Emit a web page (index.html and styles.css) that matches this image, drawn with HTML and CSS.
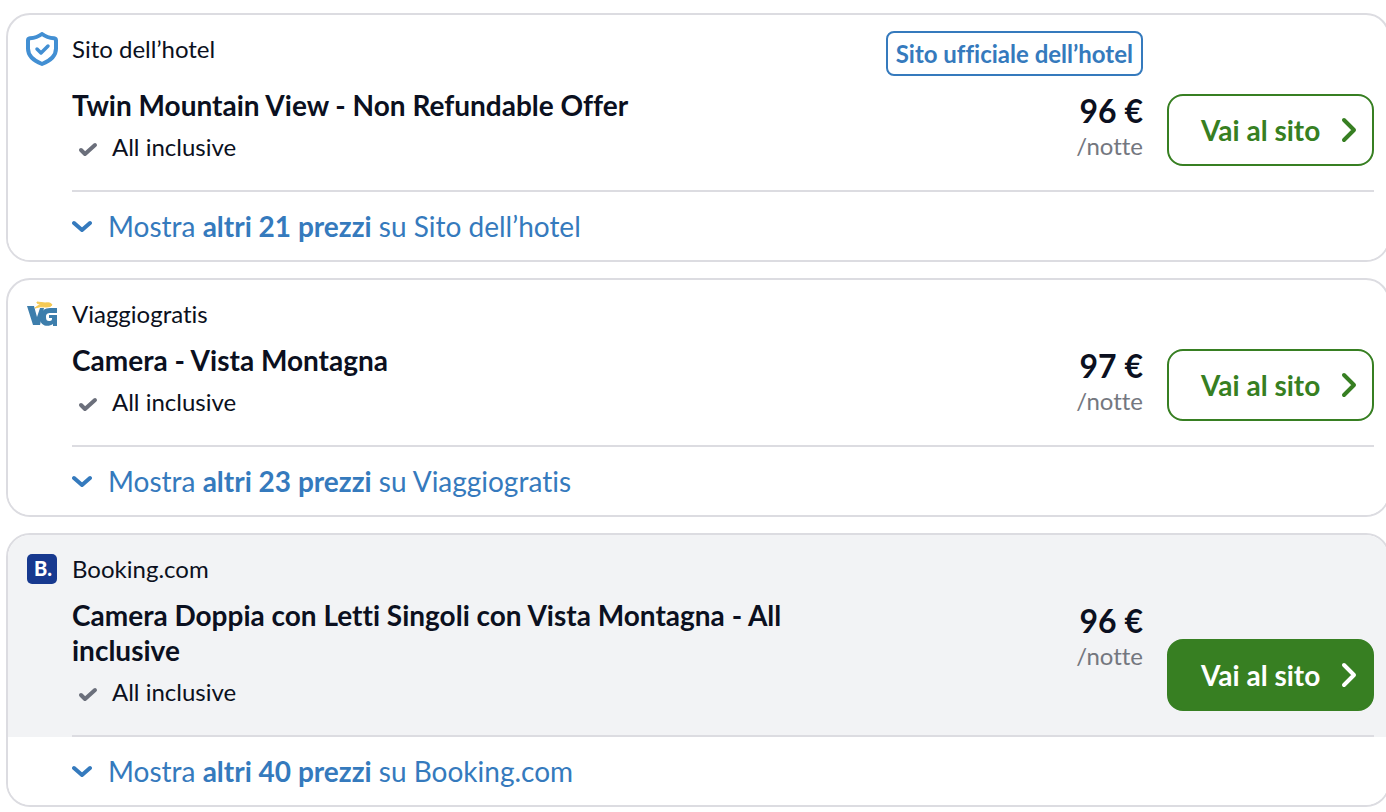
FILE: index.html
```html
<!DOCTYPE html>
<html lang="it">

<head>
    <meta charset="UTF-8">
    <meta name="viewport" content="width=device-width, initial-scale=1.0">
    <title>Offerte</title>
    <link rel="stylesheet" href="styles.css">
</head>

<body>
    <!-- shared icons -->
    <svg class="sprite" aria-hidden="true">
        <symbol id="check" viewBox="0 0 20 16">
            <path d="M3 9l4 4 10-9" fill="none" stroke="currentColor" stroke-width="4" stroke-linecap="round" stroke-linejoin="round" />
        </symbol>
        <symbol id="down" viewBox="0 0 20 14">
            <path d="M2 4l8 7 8-7" fill="none" stroke="currentColor" stroke-width="4" stroke-linecap="round" stroke-linejoin="round" />
        </symbol>
        <symbol id="right" viewBox="0 0 16 26">
            <path d="M3 3l10 10L3 23" fill="none" stroke="currentColor" stroke-width="4" stroke-linecap="round" stroke-linejoin="round" />
        </symbol>
    </svg>

    <main class="deals">
        <article class="deal">
            <div class="deal-main">
                <svg class="logo" viewBox="0 0 32 34" aria-hidden="true">
                    <path d="M16 2c4 3 8 4 12 4.200q2 .2 2 2.300v8c0 7-5 12-14 15.500C7 28.500 2 23.500 2 16.500v-8Q2 6.400 4 6.200C8 6 12 5 16 2z" fill="none" stroke="#428fd3" stroke-width="4" stroke-linejoin="round" />
                    <path d="M11 17l4 4 7-7" fill="none" stroke="#428fd3" stroke-width="3.500" stroke-linecap="round" stroke-linejoin="round" />
                </svg>
                <div class="content">
                    <div class="top">
                        <span class="site">Sito dell’hotel</span>
                        <span class="badge">Sito ufficiale dell’hotel</span>
                    </div>
                    <div class="row">
                        <div class="info">
                            <h2 class="title">Twin Mountain View - Non Refundable Offer</h2>
                            <p class="perk"><svg class="check"><use href="#check" /></svg>All inclusive</p>
                        </div>
                        <div class="price"><strong>96 €</strong><span>/notte</span></div>
                        <button class="btn">Vai al sito<svg class="arrow"><use href="#right" /></svg></button>
                    </div>
                </div>
            </div>
            <button class="more"><svg class="down"><use href="#down" /></svg><span>Mostra <b>altri 21 prezzi</b> su Sito dell’hotel</span></button>
        </article>

        <article class="deal">
            <div class="deal-main">
                <svg class="logo" viewBox="0 0 32 34" aria-hidden="true">
                    <path d="M1 9h7l3 11 3-9h4l-4 17H7z" fill="#3d7eac" />
                    <path d="M31 11v5h-6c-4 0-5 1-5 4s1 4 3 4c3 0 3-1 3-3h-3v-3h8v11h-4v-2c-4 3-13 3-13-6 0-7 5-10 10-10z" fill="#3d7eac" />
                    <path d="M9 11q3-3 6-3l-4-2V5l8 1q6-1 7 2-1 2-6 2-6-1-11 1z" fill="#f6ca55" stroke="#f6ca55" />
                </svg>
                <div class="content">
                    <div class="top">
                        <span class="site">Viaggiogratis</span>
                    </div>
                    <div class="row">
                        <div class="info">
                            <h2 class="title">Camera - Vista Montagna</h2>
                            <p class="perk"><svg class="check"><use href="#check" /></svg>All inclusive</p>
                        </div>
                        <div class="price"><strong>97 €</strong><span>/notte</span></div>
                        <button class="btn">Vai al sito<svg class="arrow"><use href="#right" /></svg></button>
                    </div>
                </div>
            </div>
            <button class="more"><svg class="down"><use href="#down" /></svg><span>Mostra <b>altri 23 prezzi</b> su Viaggiogratis</span></button>
        </article>

        <article class="deal">
            <div class="deal-main highlight">
                <svg class="logo" viewBox="0 0 32 34" aria-hidden="true">
                    <rect x="1" y="2" width="30" height="30" rx="5" fill="#17398f" />
                    <text x="8" y="24" class="logo-text">B.</text>
                </svg>
                <div class="content">
                    <div class="top">
                        <span class="site">Booking.com</span>
                    </div>
                    <div class="row">
                        <div class="info">
                            <h2 class="title">Camera Doppia con Letti Singoli con Vista Montagna - All inclusive</h2>
                            <p class="perk"><svg class="check"><use href="#check" /></svg>All inclusive</p>
                        </div>
                        <div class="price"><strong>96 €</strong><span>/notte</span></div>
                        <button class="btn btn-full">Vai al sito<svg class="arrow"><use href="#right" /></svg></button>
                    </div>
                </div>
            </div>
            <button class="more"><svg class="down"><use href="#down" /></svg><span>Mostra <b>altri 40 prezzi</b> su Booking.com</span></button>
        </article>
    </main>
</body>

</html>
```
FILE: styles.css
```css
* {
    box-sizing: border-box;
}

body {
    margin: 0;
    background-color: white;
    color: #0b1020;
    font-family: Lato, "Open Sans", sans-serif;
    font-size: 24px;
    line-height: 35px;
    font-variant-ligatures: none;
    overflow-x: hidden;
}

button {
    font: inherit;
    cursor: pointer;
}

.sprite {
    display: none;
}

.deals {
    display: flex;
    flex-direction: column;
    gap: 16px;
    padding: 13px 0 4px 6px;
    margin-right: -4px;
}

.deal {
    border: 2px solid #dcdce1;
    border-radius: 24px;
    overflow: hidden;
}

.deal-main {
    display: flex;
    padding: 16px 14px 0 18px;
}

.highlight {
    background-color: #f2f3f5;
}

.logo {
    flex: none;
    width: 32px;
    height: 34px;
    margin: 1px 14px 0 0;
}

.logo-text {
    fill: white;
    font-size: 20px;
    font-weight: 900;
}

.content {
    flex: 1;
    border-bottom: 2px solid #dcdce1;
    padding-bottom: 24px;
}

.top {
    display: flex;
    align-items: flex-start;
    justify-content: space-between;
    margin-bottom: 12px;
    padding-right: 231px;
}

.badge {
    border: 2px solid #357abd;
    border-radius: 8px;
    padding: 0 8px;
    color: #357abd;
    font-weight: bold;
    line-height: 41px;
}

.row {
    display: flex;
}

.info {
    width: 60%;
    padding-bottom: 2px;
}

.title {
    margin: 0 0 6px;
    font-size: 28px;
    line-height: 35px;
}

.perk {
    display: flex;
    align-items: center;
    margin: 0;
}

.check {
    width: 20px;
    height: 16px;
    margin: 4px 14px 0 6px;
    color: #6b6f7b;
}

.price {
    display: flex;
    flex-direction: column;
    margin: 5px 24px 0 auto;
    text-align: right;
}

.price strong {
    font-size: 32px;
}

.price span {
    color: #74777f;
}

.btn {
    display: flex;
    align-items: center;
    justify-content: space-between;
    align-self: flex-end;
    width: 207px;
    height: 72px;
    padding: 0 15px 0 32px;
    border: 2px solid #377f22;
    border-radius: 16px;
    background-color: white;
    color: #377f22;
    font-size: 28px;
    font-weight: bold;
}

.btn-full {
    background-color: #377f22;
    color: white;
}

.arrow {
    width: 16px;
    height: 26px;
}

.more {
    display: flex;
    align-items: center;
    width: 100%;
    height: 68px;
    padding: 0 14px 0 64px;
    border: none;
    background-color: white;
    color: #357abd;
    font-size: 28px;
    text-align: left;
}

.down {
    width: 20px;
    height: 14px;
    margin-right: 16px;
}
```
